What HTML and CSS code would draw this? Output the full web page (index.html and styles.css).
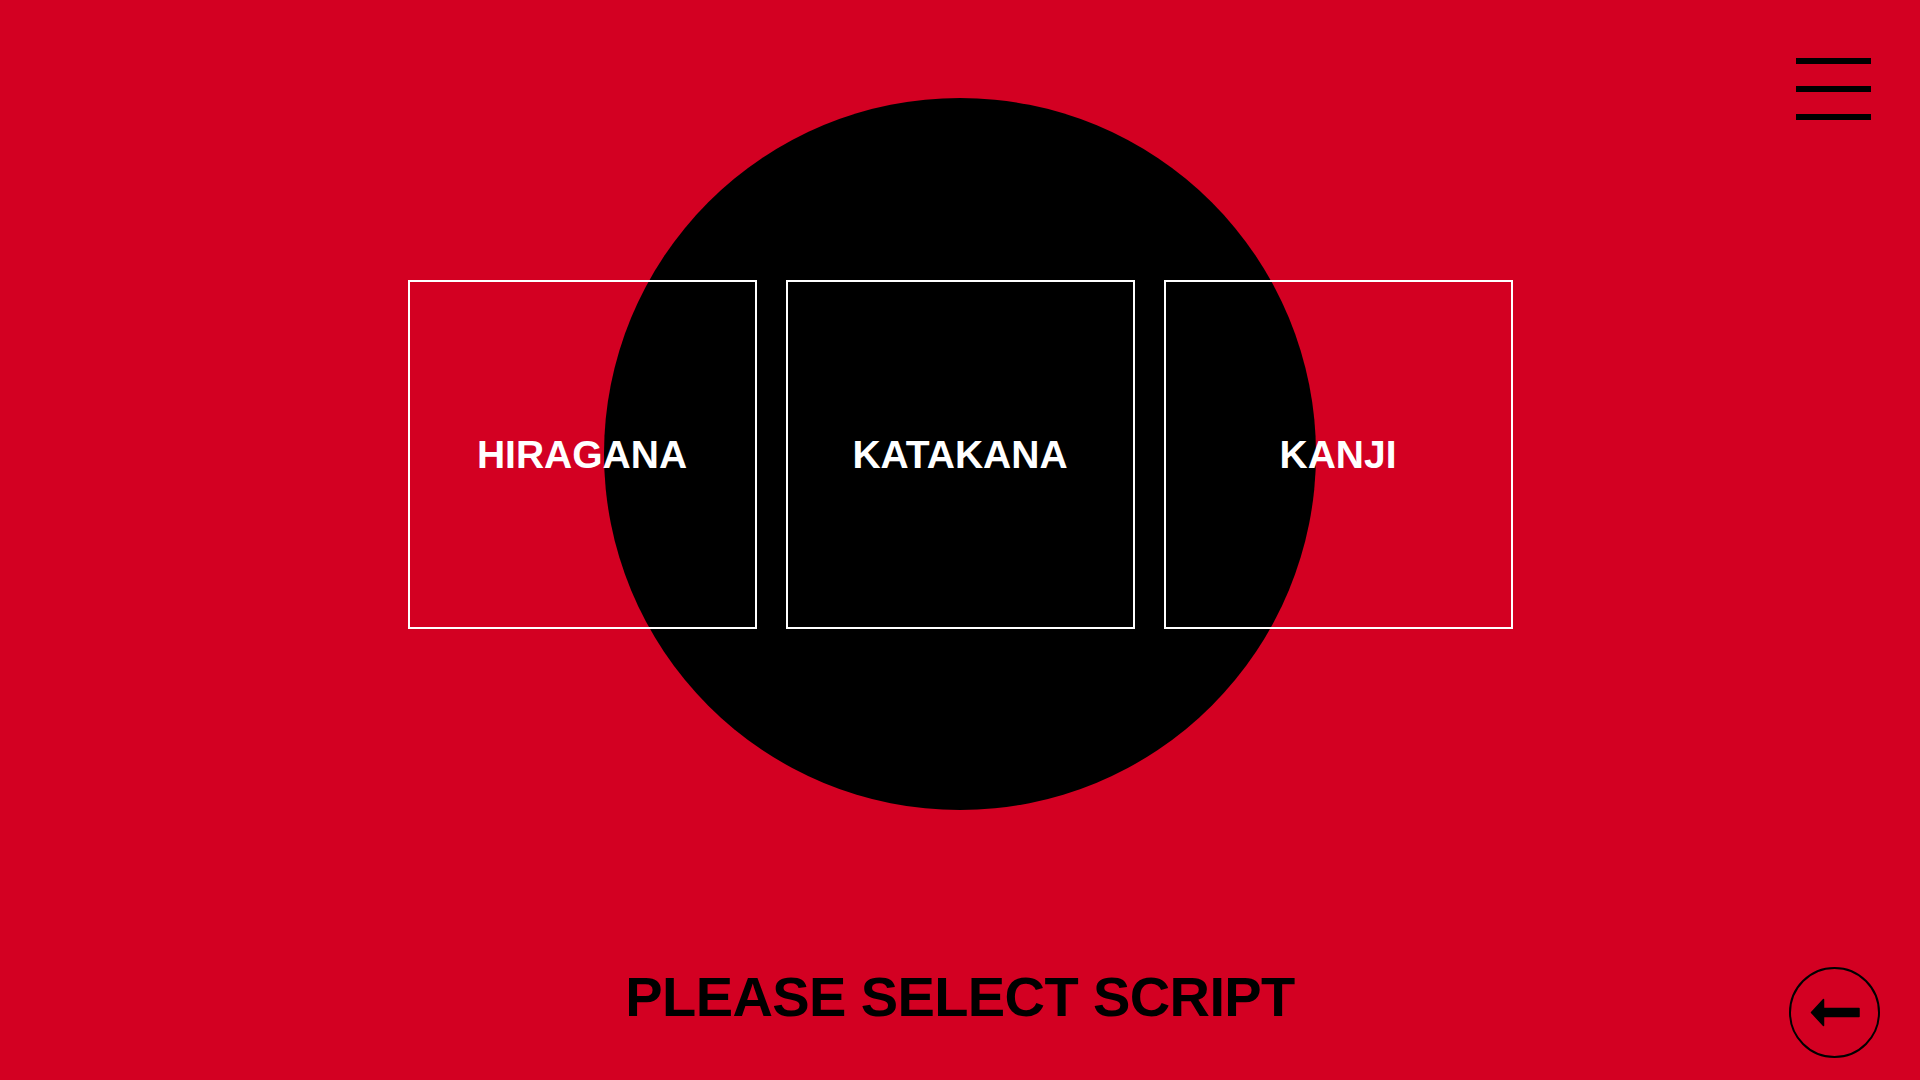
FILE: index.html
```html
<!DOCTYPE html>
<html lang="en">
<head>
<meta charset="utf-8">
<title>Select Script</title>
<link rel="stylesheet" href="styles.css">
</head>
<body>
<div class="page">
  <main class="stage">
    <div class="stage-grid">
      <div class="sun"></div>
      <div class="choices">
        <a class="choice" href="#">HIRAGANA</a>
        <a class="choice" href="#">KATAKANA</a>
        <a class="choice" href="#">KANJI</a>
      </div>
    </div>
  </main>
  <h1 class="title">PLEASE SELECT SCRIPT</h1>
  <aside class="side">
    <button class="menu" aria-label="Menu">
      <span class="menu-line"></span>
      <span class="menu-line"></span>
      <span class="menu-line"></span>
    </button>
    <button class="back" aria-label="Back">
      <svg class="back-icon" viewBox="0 0 50 29" width="50" height="29">
        <path d="M1.5 14.5 L13.5 1.5 L13.5 10.5 L49 10.5 L49 18.5 L13.5 18.5 L13.5 27.5 Z" fill="#000" stroke="#000" stroke-width="1.5" stroke-linejoin="round"/>
      </svg>
    </button>
  </aside>
</div>
</body>
</html>
```

FILE: styles.css
```css
* {
  box-sizing: border-box;
}

html, body {
  margin: 0;
  padding: 0;
  height: 100%;
}

body {
  background: #d30022;
  font-family: "Liberation Sans", Arial, sans-serif;
  overflow: hidden;
}

.page {
  display: grid;
  grid-template-columns: 1fr 1105px 1fr;
  grid-template-rows: 1fr auto;
  height: 100vh;
}

.stage {
  grid-column: 2;
  grid-row: 1;
  padding-top: 98px;
  align-self: start;
}

.stage-grid {
  display: grid;
  justify-items: center;
  align-items: center;
}

.sun {
  grid-area: 1 / 1;
  width: 712px;
  height: 712px;
  border-radius: 50%;
  background: #000;
}

.choices {
  grid-area: 1 / 1;
  display: flex;
  gap: 29px;
}

.choice {
  width: 349px;
  height: 349px;
  border: 2px solid #fff;
  display: flex;
  align-items: center;
  justify-content: center;
  padding-top: 2px;
  color: #fff;
  font-weight: 700;
  font-size: 39px;
  text-decoration: none;
}

.title {
  grid-column: 2;
  grid-row: 2;
  margin: 0;
  padding-bottom: 55px;
  text-align: center;
  font-size: 56px;
  line-height: 56px;
  font-weight: 700;
  letter-spacing: -0.6px;
  color: #000;
}

.side {
  grid-column: 3;
  grid-row: 1 / 3;
  display: flex;
  flex-direction: column;
  justify-content: space-between;
  align-items: flex-end;
  padding: 58px 40px 22px 0;
}

.menu {
  display: flex;
  flex-direction: column;
  gap: 22px;
  width: 75px;
  margin-right: 9px;
  padding: 0;
  border: 0;
  background: none;
  cursor: pointer;
}

.menu-line {
  display: block;
  width: 75px;
  height: 6px;
  background: #000;
}

.back {
  width: 91px;
  height: 91px;
  border: 2px solid #000;
  border-radius: 50%;
  background: none;
  padding: 0;
  display: flex;
  align-items: center;
  justify-content: center;
  cursor: pointer;
}

.back-icon {
  display: block;
}
```
